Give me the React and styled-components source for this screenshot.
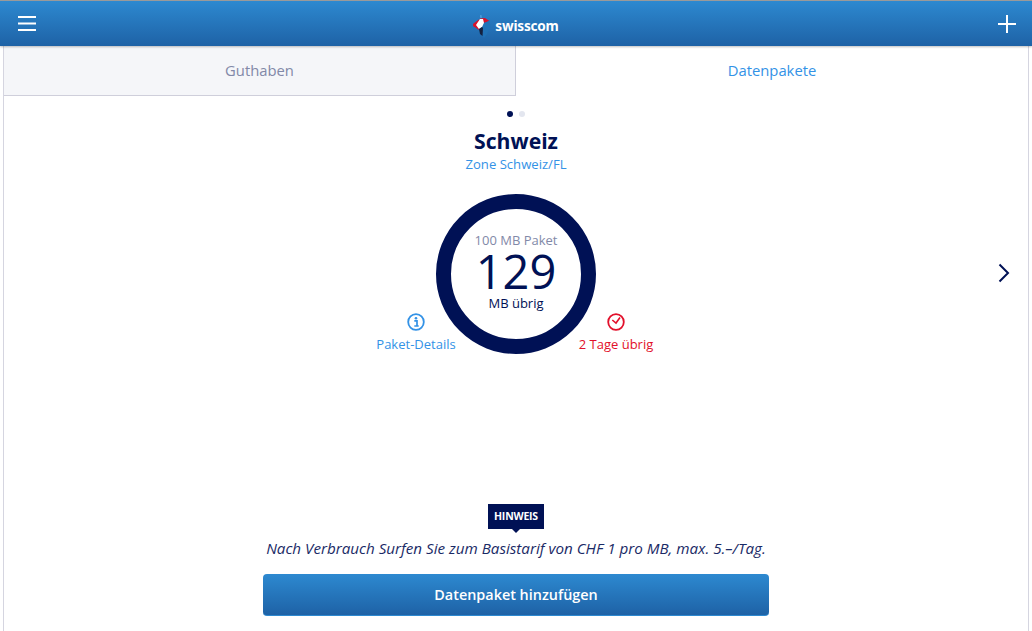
import React from 'react';
import styled, { createGlobalStyle } from 'styled-components';

const navy = '#001155';
const blue = '#3392e6';
const red = '#e2102b';
const font = `'Open Sans', 'Noto Sans', sans-serif`;

const GlobalStyle = createGlobalStyle`
  html, body {
    margin: 0;
    height: 100%;
    background: #fff;
    overflow: hidden;
  }
  * {
    box-sizing: border-box;
  }
`;

const App = () => {
  return (
    <Page>
      <GlobalStyle />
      <Header>
        <HeaderIcon aria-label='Menu'>
          <svg width='18' height='15' viewBox='0 0 18 15'>
            <path d='M0 1h18M0 7.500h18M0 14h18' stroke='#fff' strokeWidth='2' />
          </svg>
        </HeaderIcon>
        <Logo>
          <LogoMark width='20' height='26' viewBox='0 0 20 26'>
            <path d='M7 1h1.500L9 4H7.200z' fill='#4b9ad8' />
            <path d='M7 4.500 12 4l4.500 3L11 9z' fill='#d8112a' />
            <path d='M6.500 5 .5 9.500c-.7.800-.7 2 0 2.800L6 16z' fill='#d8112a' />
            <path d='M7 5h3l1 4-2 4-3 2-3-4z' fill='#fff' />
            <path d='M11 9l5-2 1.500 5-3.500 8-3 4-1.500-2 .5-8z' fill='#2173b8' />
            <path d='M6 15l3-2 1 1-.5 8L7 20z' fill='#14213f' />
          </LogoMark>
          <LogoText>swisscom</LogoText>
        </Logo>
        <HeaderIcon aria-label='Add'>
          <svg width='18' height='18' viewBox='0 0 18 18'>
            <path d='M0 9h18M9 0v18' stroke='#fff' strokeWidth='2' />
          </svg>
        </HeaderIcon>
      </Header>
      <Frame>
        <Tabs>
          <Tab>Guthaben</Tab>
          <Tab active>Datenpakete</Tab>
        </Tabs>
        <Slide>
          <Dots>
            <Dot active />
            <Dot />
          </Dots>
          <Title>Schweiz</Title>
          <Zone>Zone Schweiz/FL</Zone>
          <Usage>
            <SideLink color={blue} side='left'>
              <svg width='18' height='18' viewBox='0 0 18 18'>
                <circle cx='9' cy='9' r='7.800' fill='none' stroke={blue} strokeWidth='1.800' />
                <circle cx='9' cy='5.300' r='1.300' fill={blue} />
                <path d='M7.300 7.800H10v5M7.300 13h4.400' fill='none' stroke={blue} strokeWidth='1.700' />
              </svg>
              <span>Paket-Details</span>
            </SideLink>
            <Ring>
              <RingLabel>100 MB Paket</RingLabel>
              <RingValue>129</RingValue>
              <RingUnit>MB übrig</RingUnit>
            </Ring>
            <SideLink color={red} side='right'>
              <svg width='18' height='18' viewBox='0 0 18 18'>
                <circle cx='9' cy='9' r='7.800' fill='none' stroke={red} strokeWidth='1.800' />
                <path d='M5.300 7 9 10l4-5.500' fill='none' stroke={red} strokeWidth='1.600' />
              </svg>
              <span>2 Tage übrig</span>
            </SideLink>
          </Usage>
          <NextArrow aria-label='Weiter'>
            <svg width='12' height='20' viewBox='0 0 12 20'>
              <path d='M1.500 1.500 10 10l-8.500 8.500' fill='none' stroke={navy} strokeWidth='2' />
            </svg>
          </NextArrow>
          <Footer>
            <Badge>HINWEIS</Badge>
            <Note>Nach Verbrauch Surfen Sie zum Basistarif von CHF 1 pro MB, max. 5.–/Tag.</Note>
            <AddButton>Datenpaket hinzufügen</AddButton>
          </Footer>
        </Slide>
      </Frame>
    </Page>
  );
};

const Page = styled.div`
  display: flex;
  flex-direction: column;
  height: 631px;
  font-family: ${font};
  overflow: hidden;
`;

const Header = styled.header`
  position: relative;
  z-index: 1;
  flex: none;
  display: flex;
  align-items: center;
  justify-content: space-between;
  height: 46px;
  padding: 0 16px 0 18px;
  border-top: 1px solid #9a9a9a;
  background: linear-gradient(#2d89d0, #1e62a6);
  box-shadow: 0 1px 2px rgba(0, 0, 0, 0.25);
`;

const HeaderIcon = styled.div`
  display: flex;
  align-items: center;
`;

const Logo = styled.div`
  display: flex;
  align-items: center;
  gap: 2px;
  margin-left: -2px;
`;

const LogoMark = styled.svg`
  margin-top: 7px;
`;

const LogoText = styled.span`
  margin-top: 4px;
  color: #fff;
  font-size: 13.6px;
  font-weight: 700;
  font-family: 'Noto Sans', sans-serif;
  letter-spacing: -0.2px;
`;

const Frame = styled.main`
  flex: 1;
  display: flex;
  flex-direction: column;
  margin: 0 3px;
  border-left: 1px solid #d5d5e0;
  border-right: 1px solid #d5d5e0;
  min-height: 0;
`;

const Tabs = styled.nav`
  flex: none;
  display: grid;
  grid-template-columns: 512px 1fr;
  height: 50px;
`;

const Tab = styled.div`
  display: flex;
  align-items: center;
  justify-content: center;
  padding-bottom: 2px;
  font-size: 14.8px;
  color: ${p => (p.active ? blue : '#8289a8')};
  background: ${p => (p.active ? '#fff' : '#f5f6f9')};
  border-right: ${p => (p.active ? 'none' : '1px solid #cfcfdb')};
  border-bottom: ${p => (p.active ? 'none' : '1px solid #cfcfdb')};
`;

const Slide = styled.section`
  position: relative;
  flex: 1;
  display: flex;
  flex-direction: column;
  align-items: center;
  padding-top: 15px;
  min-height: 0;
`;

const Dots = styled.div`
  display: flex;
  gap: 6px;
  height: 6px;
`;

const Dot = styled.span`
  width: 6px;
  height: 6px;
  border-radius: 50%;
  background: ${p => (p.active ? navy : '#e3e6ef')};
`;

const Title = styled.h1`
  margin: 10px 0 0;
  font-size: 21.2px;
  line-height: 28px;
  font-weight: 700;
  color: ${navy};
`;

const Zone = styled.div`
  font-size: 13.1px;
  line-height: 18px;
  color: ${blue};
`;

const Usage = styled.div`
  display: flex;
  justify-content: center;
  margin-top: 21px;
`;

const Ring = styled.div`
  flex: none;
  display: flex;
  flex-direction: column;
  align-items: center;
  width: 160px;
  height: 160px;
  padding-top: 22px;
  border: 15px solid ${navy};
  border-radius: 50%;
  color: ${navy};
`;

const RingLabel = styled.div`
  margin-bottom: 1px;
  font-size: 13px;
  line-height: 18px;
  color: #8289a8;
`;

const RingValue = styled.div`
  font-size: 47px;
  line-height: 42px;
`;

const RingUnit = styled.div`
  font-size: 13px;
  line-height: 18px;
  margin-top: 2px;
`;

const SideLink = styled.div`
  flex: none;
  align-self: flex-end;
  display: flex;
  flex-direction: column;
  align-items: center;
  gap: 4px;
  width: 100px;
  margin-bottom: 1px;
  margin-${p => (p.side === 'left' ? 'right' : 'left')}: -30px;
  font-size: 13px;
  line-height: 18px;
  color: ${p => p.color};
`;

const NextArrow = styled.div`
  position: absolute;
  top: 167px;
  right: 18px;
  display: flex;
`;

const Footer = styled.div`
  margin-top: auto;
  display: flex;
  flex-direction: column;
  align-items: center;
  padding-bottom: 15px;
`;

const Badge = styled.div`
  position: relative;
  width: 56px;
  height: 25px;
  font-size: 10.5px;
  font-weight: 700;
  line-height: 25px;
  text-align: center;
  color: #fff;
  background: ${navy};
  letter-spacing: -0.2px;
  &::after {
    content: '';
    position: absolute;
    left: 24px;
    top: 25px;
    border: 4px solid transparent;
    border-top-color: ${navy};
    border-bottom: none;
  }
`;

const Note = styled.p`
  margin: 8px 0 15px;
  font-size: 15.2px;
  line-height: 22px;
  font-style: italic;
  color: #1a2a66;
`;

const AddButton = styled.button`
  width: 506px;
  height: 42px;
  border: none;
  border-radius: 4px;
  border-bottom: 1px solid #2d89d0;
  background: linear-gradient(#2d89d0, #1e62a6);
  color: #fff;
  font-family: ${font};
  font-size: 14.4px;
  font-weight: 600;
  padding-bottom: 2px;
`;

export default App;
